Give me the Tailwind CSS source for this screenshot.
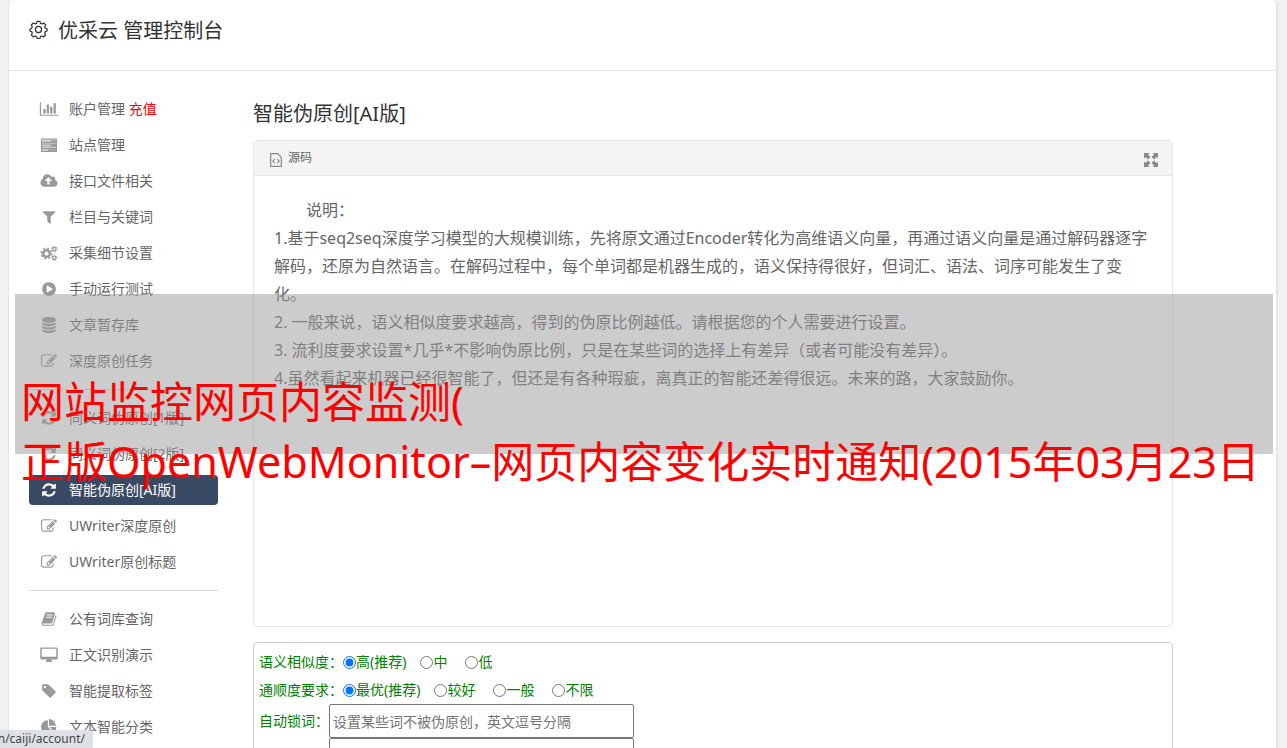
<!DOCTYPE html>
<html lang="zh-CN">
<head>
    <meta charset="UTF-8">
    <meta name="viewport" content="width=device-width, initial-scale=1.0">
    <script src="https://cdn.jsdelivr.net/npm/@tailwindcss/browser@4"></script>
    <title>优采云 管理控制台</title>
</head>
<body class="h-screen overflow-hidden bg-[#f1f1f1] pl-2 pr-[9px] font-['Noto_Sans','Noto_Sans_CJK_SC',sans-serif] font-normal text-[#666]">

    <!-- icons -->
    <svg class="hidden">
      <symbol id="i-chart" viewBox="0 0 2048 1792"><path d="M640 896v512h-256v-512h256zm384-512v1024h-256v-1024h256zm1024 1152v128h-2048v-1536h128v1408h1920zm-640-896v768h-256v-768h256zm384-384v1152h-256v-1152h256z"/></symbol>
      <symbol id="i-server" viewBox="0 0 18 16">
        <path fill-opacity=".5" d="M1 2h16v3.500H1zM1 6.500h16V10H1zM1 11h16v3.500H1z"/>
        <path d="M1 1.500h16v1H1zM1 5h16v1H1zM1 6.500h16v1H1zM1 9.500h16v1H1zM1 11h16v1H1zM1 14h16v1H1zM1 2h1v13H1zM16 2h1v13h-1zM11 3.300h5v1.400h-5zM11 7.800h5v1.400h-5zM8 12.300h8v1.400H8z"/>
      </symbol>
      <symbol id="i-cloud" viewBox="0 0 2048 1792"><path d="M1344 864q0-14-9-23l-352-352q-9-9-23-9t-23 9l-351 351q-10 12-10 24 0 14 9 23t23 9h224v352q0 13 9.500 22.500t22.500 9.500h192q13 0 22.500-9.500t9.500-22.500v-352h224q13 0 22.500-9.500t9.500-22.500zm640 288q0 159-112.500 271.500t-271.500 112.500h-1088q-185 0-316.500-131.500t-131.500-316.500q0-130 70-240t188-165q-2-30-2-43 0-212 150-362t362-150q156 0 285.500 87t188.500 231q71-62 166-62 106 0 181 75t75 181q0 76-41 138 130 31 213.500 135.500t83.500 238.500z"/></symbol>
      <symbol id="i-filter" viewBox="0 0 1792 1792"><path d="M1595 295q17 41-14 70l-493 493v742q0 42-39 59-13 5-25 5-27 0-45-19l-256-256q-19-19-19-45v-486l-493-493q-31-29-14-70 17-39 59-39h1280q42 0 59 39z"/></symbol>
      <symbol id="i-cogs" viewBox="0 0 18 16">
        <g fill="none" stroke="currentColor">
          <circle cx="6.500" cy="8.500" r="3.300" stroke-width="2.400"/>
          <circle cx="6.500" cy="8.500" r="5.200" stroke-width="1.600" stroke-dasharray="2 2.080"/>
          <circle cx="14.300" cy="4" r="1.700" stroke-width="1.300"/>
          <circle cx="14.300" cy="4" r="2.700" stroke-width="1" stroke-dasharray="1.400 1.430"/>
          <circle cx="14.300" cy="12.800" r="1.700" stroke-width="1.300"/>
          <circle cx="14.300" cy="12.800" r="2.700" stroke-width="1" stroke-dasharray="1.400 1.430"/>
        </g>
      </symbol>
      <symbol id="i-play" viewBox="0 0 1792 1792"><path d="M896 128q209 0 385.500 103t279.500 279.500 103 385.500-103 385.500-279.500 279.500-385.500 103-385.500-103-279.500-279.500-103-385.500 103-385.500 279.500-279.500 385.500-103zm384 823q32-18 32-55t-32-55l-544-320q-31-19-64-1-32 19-32 56v640q0 37 32 56 16 8 32 8 17 0 32-9z"/></symbol>
      <symbol id="i-database" viewBox="0 0 1792 1792"><path d="M896 768q237 0 443-43t325-127v170q0 69-103 128t-280 93.500-385 34.500-385-34.500-280-93.500-103-128v-170q119 84 325 127t443 43zm0 768q237 0 443-43t325-127v170q0 69-103 128t-280 93.500-385 34.500-385-34.500-280-93.500-103-128v-170q119 84 325 127t443 43zm0-384q237 0 443-43t325-127v170q0 69-103 128t-280 93.500-385 34.500-385-34.500-280-93.500-103-128v-170q119 84 325 127t443 43zm0-1152q208 0 385 34.500t280 93.500 103 128v128q0 69-103 128t-280 93.500-385 34.500-385-34.500-280-93.500-103-128v-128q0-69 103-128t280-93.500 385-34.500z"/></symbol>
      <symbol id="i-edit" viewBox="0 0 1792 1792"><path d="M888 1184l116-116-152-152-116 116v56h96v96h56zm440-720q-16-16-33 1l-350 350q-17 17-1 33t33-1l350-350q17-17 1-33zm80 594v190q0 119-84.500 203.500t-203.500 84.500h-832q-119 0-203.500-84.500t-84.500-203.500v-832q0-119 84.500-203.500t203.500-84.500h832q63 0 117 25 15 7 18 23 3 17-9 29l-49 49q-14 14-32 8-23-6-45-6h-832q-66 0-113 47t-47 113v832q0 66 47 113t113 47h832q66 0 113-47t47-113v-126q0-13 9-22l64-64q15-15 35-7t20 29zm-96-738l288 288-672 672h-288v-288zm444 132l-92 92-288-288 92-92q28-28 68-28t68 28l152 152q28 28 28 68t-28 68z"/></symbol>
      <symbol id="i-refresh" viewBox="0 0 1792 1792"><path d="M1639 1056q0 5-1 7-64 268-268 434.500t-478 166.500q-146 0-282.500-55t-243.500-157l-129 129q-19 19-45 19t-45-19-19-45v-448q0-26 19-45t45-19h448q26 0 45 19t19 45-19 45l-137 137q71 66 161 102t187 36q134 0 250-65t186-179q11-17 53-117 8-23 30-23h192q13 0 22.500 9.500t9.500 22.500zm25-800v448q0 26-19 45t-45 19h-448q-26 0-45-19t-19-45 19-45l138-138q-148-137-349-137-134 0-250 65t-186 179q-11 17-53 117-8 23-30 23h-199q-13 0-22.500-9.500t-9.500-22.500v-7q65-268 270-434.500t480-166.500q146 0 284 55.500t245 156.500l130-129q19-19 45-19t45 19 19 45z"/></symbol>
      <symbol id="i-book" viewBox="0 0 1792 1792"><path d="M1703 478q40 57 18 129l-275 906q-19 64-76.500 107.500t-122.500 43.500h-923q-77 0-148.500-53.500t-99.500-131.500q-24-67-2-127 0-4 3-27t4-37q1-8-3-21.500t-3-19.500q2-11 8-21t16.500-23.500 16.500-23.500q23-38 45-91.500t30-91.500q3-10 .5-30t-.5-28q3-11 17-28t17-23q21-36 42-92t25-90q1-9-2.500-32t.5-28q4-13 22-30.500t22-22.500q19-26 42.500-84.500t27.500-96.500q1-8-3-25.500t-2-26.500q2-8 9-18t18-23 17-21q8-12 16.500-30.500t15-35 16-36 19.500-32 26.500-23.500 36-11.500 47.500 5.500l-1 3q38-9 51-9h761q74 0 114 56t18 130l-274 906q-36 119-71.500 153.500t-128.500 34.500h-869q-27 0-38 15-11 16-1 43 24 70 144 70h923q29 0 56-15.500t35-41.500l300-987q7-22 5-57 38 15 59 43zm-1064 2q-4 13 2 22.500t20 9.500h608q13 0 25.500-9.500t16.500-22.500l21-64q4-13-2-22.500t-20-9.500h-608q-13 0-25.500 9.500t-16.500 22.500zm-83 256q-4 13 2 22.500t20 9.500h608q13 0 25.500-9.500t16.500-22.500l21-64q4-13-2-22.500t-20-9.500h-608q-13 0-25.500 9.500t-16.500 22.500z"/></symbol>
      <symbol id="i-desktop" viewBox="0 0 18 16"><path fill-rule="evenodd" d="M1.500 0.500h15a1.300 1.300 0 0 1 1.300 1.300v9.400a1.300 1.300 0 0 1-1.300 1.300h-5.200c0 1 .7 1.500.7 2s-.3.500-.6.500H6.600c-.3 0-.6 0-.6-.5s.7-1 .7-2H1.500A1.300 1.300 0 0 1 .2 11.200V1.800A1.300 1.300 0 0 1 1.500.5zM1.700 1.700v8h14.600v-8z"/></symbol>
      <symbol id="i-tag" viewBox="0 0 1792 1792"><path d="M576 448q0-53-37.500-90.500t-90.500-37.500-90.500 37.500-37.500 90.500 37.500 90.500 90.500 37.500 90.500-37.500 37.500-90.500zm1067 576q0 53-37 90l-491 492q-39 37-91 37-53 0-90-37l-715-716q-38-37-64.500-101t-26.500-117v-416q0-52 38-90t90-38h416q53 0 117 26.500t102 64.500l715 714q37 39 37 91z"/></symbol>
      <symbol id="i-pie" viewBox="0 0 1792 1792"><path d="M768 890l546 546q-106 108-247.500 168t-298.500 60q-209 0-385.500-103t-279.500-279.500-103-385.500 103-385.500 279.500-279.500 385.500-103v762zm187 6h773q0 157-60 298.500t-168 247.500zm709-128h-768v-768q209 0 385.500 103t279.500 279.500 103 385.500z"/></symbol>
    </svg>

    <div class="min-h-screen rounded-t-md border-l border-r-2 border-[#e5e5e5] bg-white">
      <header class="flex h-[71px] items-start gap-2.5 border-b border-[#e5e5e5] px-5 pt-4 text-[#333]">
        <svg class="mt-1 size-[19px]" viewBox="0 0 20 20" fill="none" stroke="currentColor" stroke-width="1.300">
          <circle cx="10" cy="10" r="3.200"/>
          <path stroke-linejoin="round" d="M8.500 1.500h3l.6 2 1.500.6 2-.9 1.900 2-.9 2 .5 1.400 1.900.9v2l-2 .9-.5 1.500.9 1.900-2 2-1.900-.9-1.400.6-.7 2H8.600l-.7-2-1.400-.6-2 .9-2-2 .9-1.900-.5-1.500-1.900-.9v-2l1.900-.9.5-1.400-.9-2 2-2 2 .9 1.400-.6z"/>
        </svg>
        <h1 class="text-xl leading-[30px]">优采云 管理控制台</h1>
      </header>

      <div class="flex">
        <nav class="w-[209px] shrink-0 pt-[23px] pl-5 text-sm">
          <ul class="flex flex-col gap-1.5">
            <li><a href="#" class="flex h-[30px] items-center gap-2.5 pl-2.5"><svg class="h-4 w-5 fill-[#999] text-[#999]"><use href="#i-chart"/></svg><span>账户管理 <span class="text-[#f00]">充值</span></span></a></li>
            <li><a href="#" class="flex h-[30px] items-center gap-2.5 pl-2.5"><svg class="h-4 w-5 fill-[#999] text-[#999]"><use href="#i-server"/></svg>站点管理</a></li>
            <li><a href="#" class="flex h-[30px] items-center gap-2.5 pl-2.5"><svg class="h-4 w-5 fill-[#999] text-[#999]"><use href="#i-cloud"/></svg>接口文件相关</a></li>
            <li><a href="#" class="flex h-[30px] items-center gap-2.5 pl-2.5"><svg class="h-4 w-5 fill-[#999] text-[#999]"><use href="#i-filter"/></svg>栏目与关键词</a></li>
            <li><a href="#" class="flex h-[30px] items-center gap-2.5 pl-2.5"><svg class="h-4 w-5 fill-[#999] text-[#999]"><use href="#i-cogs"/></svg>采集细节设置</a></li>
            <li><a href="#" class="flex h-[30px] items-center gap-2.5 pl-2.5"><svg class="h-4 w-5 fill-[#999] text-[#999]"><use href="#i-play"/></svg>手动运行测试</a></li>
            <li><a href="#" class="flex h-[30px] items-center gap-2.5 pl-2.5"><svg class="h-4 w-5 fill-[#999] text-[#999]"><use href="#i-database"/></svg>文章暂存库</a></li>
            <li><a href="#" class="flex h-[30px] items-center gap-2.5 pl-2.5"><svg class="h-4 w-5 fill-[#999] text-[#999]"><use href="#i-edit"/></svg>深度原创任务</a></li>
          </ul>
          <hr class="my-[13px] border-[#ddd]">
          <ul class="flex flex-col gap-1.5">
            <li><a href="#" class="flex h-[30px] items-center gap-2.5 pl-2.5"><svg class="h-4 w-5 fill-[#999] text-[#999]"><use href="#i-refresh"/></svg>同义词伪原创[1版]</a></li>
            <li><a href="#" class="flex h-[30px] items-center gap-2.5 pl-2.5"><svg class="h-4 w-5 fill-[#999] text-[#999]"><use href="#i-refresh"/></svg>同义词伪原创[2版]</a></li>
            <li><a href="#" class="flex h-[30px] items-center gap-2.5 rounded bg-[#394963] pl-2.5 text-white"><svg class="h-4 w-5 fill-white"><use href="#i-refresh"/></svg>智能伪原创[AI版]</a></li>
            <li><a href="#" class="flex h-[30px] items-center gap-2.5 pl-2.5"><svg class="h-4 w-5 fill-[#999] text-[#999]"><use href="#i-edit"/></svg>UWriter深度原创</a></li>
            <li><a href="#" class="flex h-[30px] items-center gap-2.5 pl-2.5"><svg class="h-4 w-5 fill-[#999] text-[#999]"><use href="#i-edit"/></svg>UWriter原创标题</a></li>
          </ul>
          <hr class="my-[13px] border-[#ddd]">
          <ul class="flex flex-col gap-1.5">
            <li><a href="#" class="flex h-[30px] items-center gap-2.5 pl-2.5"><svg class="h-4 w-5 fill-[#999] text-[#999]"><use href="#i-book"/></svg>公有词库查询</a></li>
            <li><a href="#" class="flex h-[30px] items-center gap-2.5 pl-2.5"><svg class="h-4 w-5 fill-[#999] text-[#999]"><use href="#i-desktop"/></svg>正文识别演示</a></li>
            <li><a href="#" class="flex h-[30px] items-center gap-2.5 pl-2.5"><svg class="h-4 w-5 fill-[#999] text-[#999]"><use href="#i-tag"/></svg>智能提取标签</a></li>
            <li><a href="#" class="flex h-[30px] items-center gap-2.5 pl-2.5"><svg class="h-4 w-5 fill-[#999] text-[#999]"><use href="#i-pie"/></svg>文本智能分类</a></li>
          </ul>
        </nav>

        <main class="min-w-0 flex-1 pt-7 pr-[103px] pl-[35px]">
          <h2 class="text-xl leading-[30px] text-[#333]">智能伪原创[AI版]</h2>

          <section class="mt-[11px] min-h-[487px] rounded border border-[#e5e5e5]">
            <div class="flex h-[35px] items-center justify-between border-b border-[#e5e5e5] bg-[#f4f4f4] pr-3.5 pl-4 text-xs">
              <button class="flex items-center gap-1.5">
                <svg class="mt-1 h-3.5 w-3" viewBox="0 0 12 14" fill="none" stroke="#888" stroke-width="1.200">
                  <path d="M.7.700h7l3.600 3.600v9H.700z"/>
                  <path d="M4.800 6.200L2.800 8.200l2 2M7.200 6.200l2 2-2 2"/>
                </svg>
                源码
              </button>
              <button aria-label="全屏">
                <svg class="mt-1 size-3.5 fill-[#888]" viewBox="0 0 14 14">
                  <path d="M0 0h5.500L4 1.500 6.400 4 4 6.400 1.500 4 0 5.500zM14 0v5.500L12.500 4 10 6.400 7.600 4 10 1.500 8.500 0zM0 14V8.500L1.500 10 4 7.600 6.400 10 4 12.500 5.500 14zM14 14H8.500l1.500-1.500L7.600 10 10 7.600l2.500 2.400L14 8.500z"/>
                </svg>
              </button>
            </div>
            <div class="px-5 pt-5 text-base leading-7">
              <p class="indent-8">说明：</p>
              <p>1.基于seq2seq深度学习模型的大规模训练，先将原文通过Encoder转化为高维语义向量，再通过语义向量是通过解码器逐字解码，还原为自然语言。在解码过程中，每个单词都是机器生成的，语义保持得很好，但词汇、语法、词序可能发生了变化。</p>
              <p>2. 一般来说，语义相似度要求越高，得到的伪原比例越低。请根据您的个人需要进行设置。</p>
              <p>3. 流利度要求设置*几乎*不影响伪原比例，只是在某些词的选择上有差异（或者可能没有差异）。</p>
              <p>4.虽然看起来机器已经很智能了，但还是有各种瑕疵，离真正的智能还差得很远。未来的路，大家鼓励你。</p>
            </div>
          </section>

          <form class="mt-[15px] rounded border border-[#ccc] px-[5px] pt-[5px] text-sm text-[#008000]">
            <div class="flex h-7 items-center">
              <span>语义相似度：</span>
              <label class="mr-3.5 flex items-center"><input type="radio" name="similar" class="size-[13px]" checked>高(推荐)</label>
              <label class="mr-[18px] flex items-center"><input type="radio" name="similar" class="size-[13px]">中</label>
              <label class="flex items-center"><input type="radio" name="similar" class="size-[13px]">低</label>
            </div>
            <div class="flex h-7 items-center">
              <span>通顺度要求：</span>
              <label class="mr-3.5 flex items-center"><input type="radio" name="fluent" class="size-[13px]" checked>最优(推荐)</label>
              <label class="mr-[18px] flex items-center"><input type="radio" name="fluent" class="size-[13px]">较好</label>
              <label class="mr-[18px] flex items-center"><input type="radio" name="fluent" class="size-[13px]">一般</label>
              <label class="flex items-center"><input type="radio" name="fluent" class="size-[13px]">不限</label>
            </div>
            <div class="flex items-center">
              <label for="lock-words">自动锁词：</label>
              <input id="lock-words" type="text" placeholder="设置某些词不被伪原创，英文逗号分隔" class="h-[34px] w-[305px] rounded-xs border border-[#767676] px-[3px] placeholder:text-[#757575]">
            </div>
            <textarea aria-label="锁定词列表" class="ml-[70px] h-24 w-[305px] rounded-xs border border-[#767676]"></textarea>
          </form>
        </main>
      </div>
    </div>

    <!-- caption band over the page -->
    <div class="absolute top-[294px] right-3.5 left-[15px] h-40 bg-[#999]/50 pt-[78px] pl-1.5 text-[43px] leading-[60px] whitespace-nowrap text-[#f00]">
      <p>网站监控网页内容监测(</p>
      <p>正版OpenWebMonitor–网页内容变化实时通知(2015年03月23日</p>
    </div>

    <!-- link address bar -->
    <div class="absolute bottom-0 left-0 flex h-[18px] w-[93px] items-center justify-end overflow-hidden rounded-tr bg-[#dee1e6] pr-2 text-xs text-[#444]">n/caiji/account/</div>
</body>
</html>
